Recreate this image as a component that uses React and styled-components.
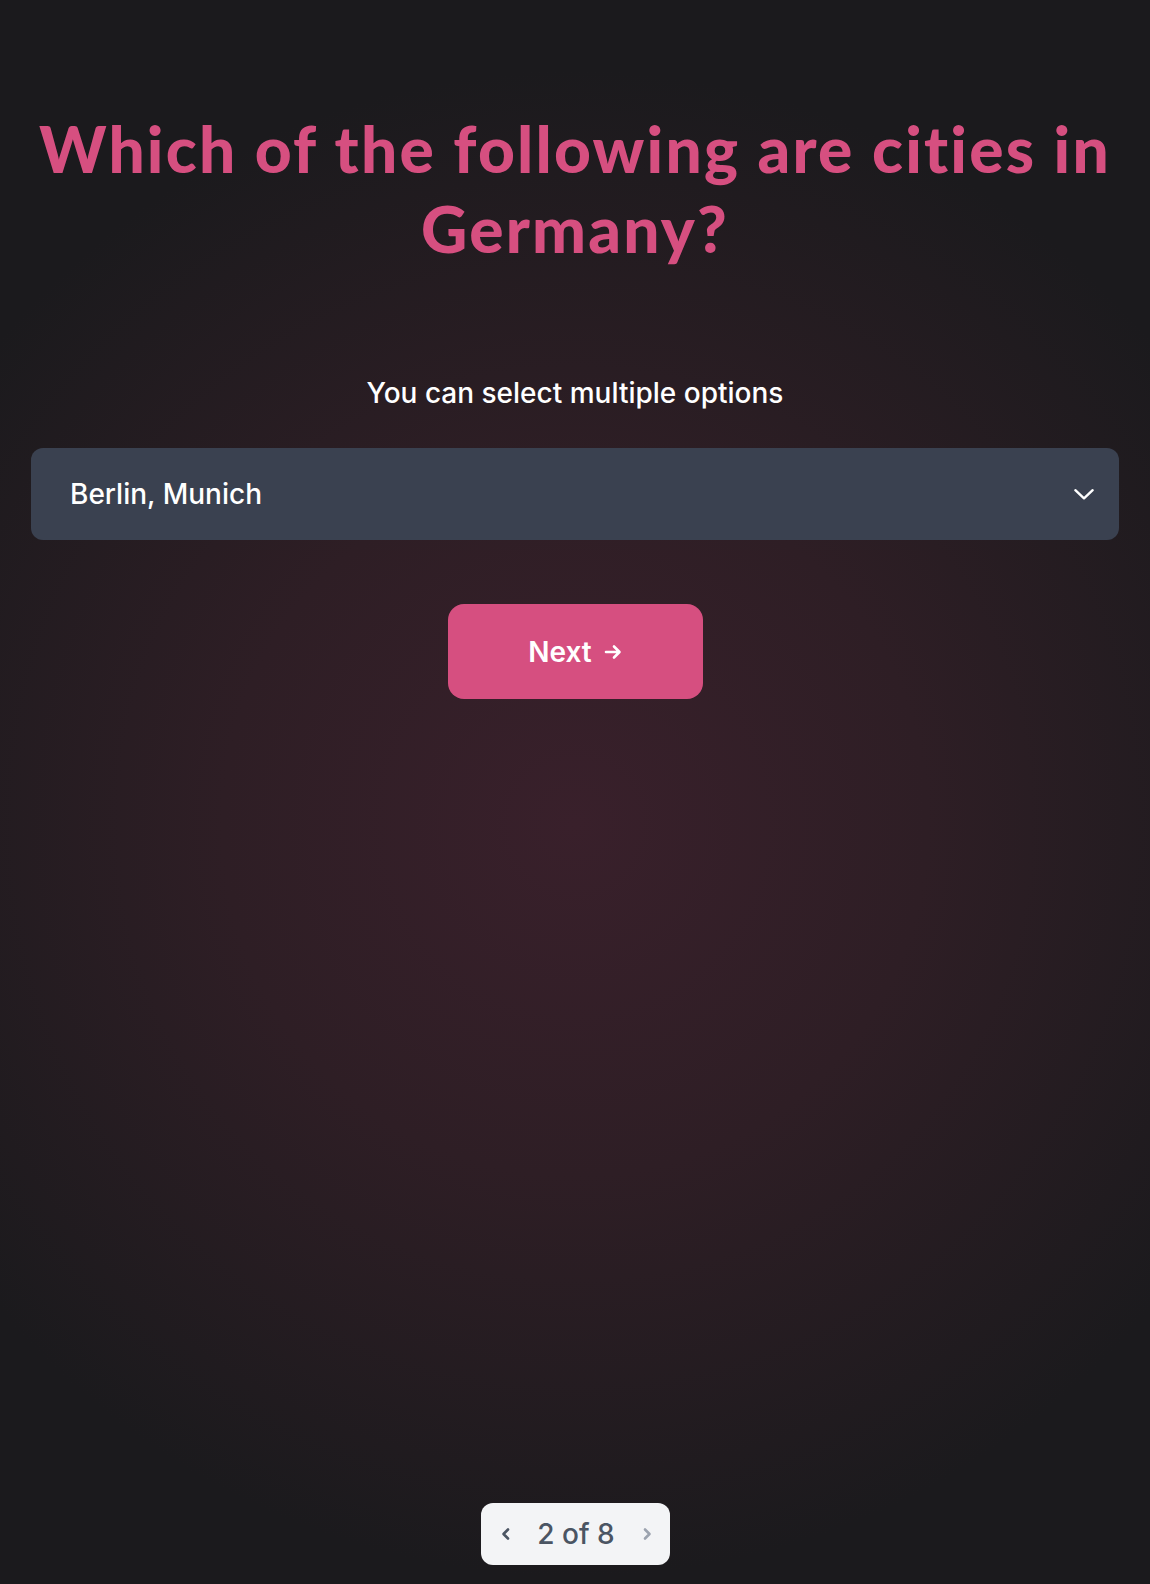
import React from "react";
import styled, { createGlobalStyle } from "styled-components";

const Global = createGlobalStyle`
  html, body { margin: 0; padding: 0; }
  body {
    background: #1b1a1d;
    font-family: Inter, "Noto Sans", sans-serif;
    color: #fff;
  }
  * { box-sizing: border-box; }
`;

const Page = styled.div`
  min-height: 1584px;
  display: flex;
  flex-direction: column;
  align-items: center;
  padding: 109px 31px 19px;
  background: radial-gradient(circle at 50% 52%, #39202b 0%, #2e1e25 35%, #1b1a1d 75%);
`;

const Title = styled.h1`
  margin: 0;
  font-family: Lato, "Open Sans", sans-serif;
  font-weight: 900;
  font-size: 64px;
  line-height: 80px;
  color: #d64f80;
  text-align: center;
  letter-spacing: 2.2px;
`;

const Hint = styled.p`
  margin: 106px 0 0;
  font-size: 28px;
  font-weight: 500;
  line-height: 36px;
`;

const Select = styled.div`
  margin-top: 37px;
  width: 100%;
  height: 92px;
  border-radius: 12px;
  background: #3a4150;
  display: flex;
  align-items: center;
  justify-content: space-between;
  padding: 0 22px 0 39px;
  font-size: 28px;
  font-weight: 500;
`;

const NextButton = styled.button`
  margin-top: 64px;
  width: 255px;
  height: 95px;
  border: none;
  border-radius: 16px;
  background: #d64f80;
  color: #fff;
  font-family: Inter, sans-serif;
  font-size: 28px;
  font-weight: 600;
  display: flex;
  align-items: center;
  justify-content: center;
  gap: 12px;
`;

const Spacer = styled.div`
  flex: 1;
`;

const Pager = styled.div`
  width: 189px;
  height: 62px;
  border-radius: 12px;
  background: #f3f4f6;
  display: flex;
  align-items: center;
  justify-content: space-between;
  padding: 0 16px 0 18px;
  color: #4b5563;
  font-size: 28px;
  font-weight: 500;
`;

const Chevron = ({ dir, color }) => (
  <svg width="14" height="14" viewBox="0 0 14 14" fill="none" stroke={color} strokeWidth="2.6" strokeLinecap="round" strokeLinejoin="round">
    {dir === "left" ? <path d="M9 2.5 4.5 7 9 11.5" /> : <path d="M5 2.5 9.5 7 5 11.5" />}
  </svg>
);

export default function App() {
  return (
    <>
      <Global />
      <Page>
        <Title>
          Which of the following are cities in
          <br />
          Germany?
        </Title>
        <Hint>You can select multiple options</Hint>
        <Select>
          <span>Berlin, Munich</span>
          <svg width="26" height="26" viewBox="0 0 24 24" fill="none" stroke="#fff" strokeWidth="2.2" strokeLinecap="round" strokeLinejoin="round">
            <path d="M4 8.5 12 16l8-7.5" />
          </svg>
        </Select>
        <NextButton>
          Next
          <svg width="18" height="18" viewBox="0 0 18 18" fill="none" stroke="#fff" strokeWidth="2.6" strokeLinecap="round" strokeLinejoin="round">
            <path d="M2 9h13M10 3.5 15.5 9 10 14.5" />
          </svg>
        </NextButton>
        <Spacer />
        <Pager>
          <Chevron dir="left" color="#4b5563" />
          <span>2 of 8</span>
          <Chevron dir="right" color="#9ca3af" />
        </Pager>
      </Page>
    </>
  );
}
